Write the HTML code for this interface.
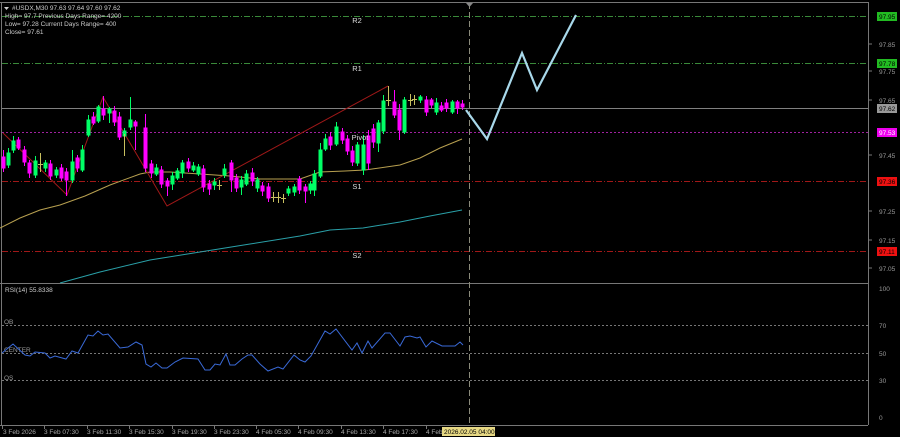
<!DOCTYPE html>
<html><head><style>
html,body{margin:0;padding:0;background:#000;}
svg{display:block;font-family:"Liberation Sans",sans-serif;}
</style></head><body>
<svg width="900" height="437" viewBox="0 0 900 437" xmlns="http://www.w3.org/2000/svg">
<rect width="900" height="437" fill="#000"/>
<!-- frames -->
<g stroke="#777" stroke-width="1" fill="none">
<line x1="0" y1="2.5" x2="868" y2="2.5"/>
<line x1="1.5" y1="2" x2="1.5" y2="425"/>
<line x1="868.5" y1="2" x2="868.5" y2="425"/>
<line x1="0" y1="283.5" x2="868" y2="283.5"/>
<line x1="0" y1="425.5" x2="868" y2="425.5"/>
</g>
<!-- levels -->
<line x1="2" y1="16.5" x2="868" y2="16.5" stroke="#3a8a3a" stroke-dasharray="6,2,1,2"/>
<line x1="2" y1="63.5" x2="868" y2="63.5" stroke="#3a8a3a" stroke-dasharray="6,2,1,2"/>
<line x1="2" y1="108.5" x2="868" y2="108.5" stroke="#808080"/>
<line x1="2" y1="132.5" x2="868" y2="132.5" stroke="#a020a0" stroke-dasharray="2,2"/>
<line x1="2" y1="181.5" x2="868" y2="181.5" stroke="#a01818" stroke-dasharray="6,2,1,2"/>
<line x1="2" y1="251.5" x2="868" y2="251.5" stroke="#a01818" stroke-dasharray="6,2,1,2"/>
<!-- RSI levels -->
<g stroke="#777" stroke-dasharray="2,2"><line x1="2" y1="325.5" x2="868" y2="325.5"/><line x1="2" y1="353.5" x2="868" y2="353.5"/><line x1="2" y1="380.5" x2="868" y2="380.5"/></g>
<!-- vertical dashed -->
<line x1="469.5" y1="3" x2="469.5" y2="425" stroke="#8a8a7a" stroke-dasharray="6,3"/>
<polygon points="466,3 473,3 469.5,7" fill="#888"/>
<!-- MAs -->
<polyline fill="none" stroke="#2aa0a8" stroke-width="1" points="60,283 100,272 150,260 200,252 250,244 300,236 330,230 363,228 400,222 430,216 462,210"/>
<polyline fill="none" stroke="#b8a050" stroke-width="1" points="0,228 20,218 40,210 60,205 85,196 110,185 140,174 150,172 170,172 200,174 230,176 260,179 300,179 320,172 345,171 365,170 400,165 420,158 440,148 462,139"/>
<!-- zigzag -->
<polyline fill="none" stroke="#a01818" stroke-width="1" points="3,133 67,195 103,97 167,206 388,86"/>
<!-- candles -->
<g stroke-width="1">
<g stroke="#00ff66" fill="#00ff66">
<line x1="8.5" y1="148" x2="8.5" y2="168"/><rect x="7" y="153" width="3" height="12"/>
<line x1="13.5" y1="136" x2="13.5" y2="153"/><rect x="12" y="141" width="3" height="9"/>
<line x1="35.5" y1="156" x2="35.5" y2="178"/><rect x="34" y="161" width="3" height="14"/>
<line x1="45.5" y1="160" x2="45.5" y2="172"/><rect x="44" y="163" width="3" height="5"/>
<line x1="56.5" y1="167" x2="56.5" y2="178"/><rect x="55" y="170" width="3" height="5"/>
<line x1="72.5" y1="150" x2="72.5" y2="183"/><rect x="71" y="162" width="3" height="18"/>
<line x1="82.5" y1="145" x2="82.5" y2="172"/><rect x="81" y="150" width="3" height="20"/>
<line x1="88.5" y1="115" x2="88.5" y2="137"/><rect x="87" y="120" width="3" height="15"/>
<line x1="98.5" y1="105" x2="98.5" y2="123"/><rect x="97" y="107" width="3" height="14"/>
<line x1="109.5" y1="107" x2="109.5" y2="123"/><rect x="108" y="109" width="3" height="4"/>
<line x1="124.5" y1="128" x2="124.5" y2="140"/><rect x="123" y="131" width="3" height="5"/>
<line x1="130.5" y1="97" x2="130.5" y2="130"/><rect x="129" y="120" width="3" height="7"/>
<line x1="156.5" y1="164" x2="156.5" y2="176"/><rect x="155" y="168" width="3" height="6"/>
<line x1="172.5" y1="172" x2="172.5" y2="190"/><rect x="171" y="176" width="3" height="8"/>
<line x1="177.5" y1="168" x2="177.5" y2="180"/><rect x="176" y="171" width="3" height="7"/>
<line x1="182.5" y1="160" x2="182.5" y2="178"/><rect x="181" y="163" width="3" height="10"/>
<line x1="193.5" y1="162" x2="193.5" y2="172"/><rect x="192" y="166" width="3" height="4"/>
<line x1="198.5" y1="164" x2="198.5" y2="176"/><rect x="197" y="167" width="3" height="7"/>
<line x1="214.5" y1="178" x2="214.5" y2="190"/><rect x="213" y="182" width="3" height="3"/>
<line x1="224.5" y1="164" x2="224.5" y2="178"/><rect x="223" y="169" width="3" height="6"/>
<line x1="241.5" y1="176" x2="241.5" y2="195"/><rect x="240" y="180" width="3" height="7"/>
<line x1="246.5" y1="170" x2="246.5" y2="186"/><rect x="245" y="174" width="3" height="10"/>
<line x1="257.5" y1="177" x2="257.5" y2="192"/><rect x="256" y="180" width="3" height="8"/>
<line x1="288.5" y1="186" x2="288.5" y2="196"/><rect x="287" y="189" width="3" height="4"/>
<line x1="294.5" y1="184" x2="294.5" y2="196"/><rect x="293" y="187" width="3" height="5"/>
<line x1="310.5" y1="181" x2="310.5" y2="194"/><rect x="309" y="184" width="3" height="6"/>
<line x1="314.5" y1="170" x2="314.5" y2="196"/><rect x="313" y="174" width="3" height="16"/>
<line x1="320.5" y1="143" x2="320.5" y2="178"/><rect x="319" y="150" width="3" height="26"/>
<line x1="325.5" y1="134" x2="325.5" y2="151"/><rect x="324" y="139" width="3" height="10"/>
<line x1="336.5" y1="122" x2="336.5" y2="146"/><rect x="335" y="127" width="3" height="17"/>
<line x1="357.5" y1="142" x2="357.5" y2="166"/><rect x="356" y="145" width="3" height="18"/>
<line x1="363.5" y1="135" x2="363.5" y2="175"/><rect x="362" y="145" width="3" height="25"/>
<line x1="378.5" y1="120" x2="378.5" y2="152"/><rect x="377" y="123" width="3" height="20"/>
<line x1="383.5" y1="95" x2="383.5" y2="134"/><rect x="382" y="101" width="3" height="30"/>
<line x1="404.5" y1="97" x2="404.5" y2="134"/><rect x="403" y="100" width="3" height="32"/>
<line x1="420.5" y1="95" x2="420.5" y2="103"/><rect x="419" y="97" width="3" height="3"/>
<line x1="436.5" y1="98" x2="436.5" y2="115"/><rect x="435" y="103" width="3" height="9"/>
<line x1="452.5" y1="100" x2="452.5" y2="114"/><rect x="451" y="102" width="3" height="10"/>
</g>
<g stroke="#ff00ff" fill="#ff00ff">
<line x1="3.5" y1="150" x2="3.5" y2="172"/><rect x="2" y="157" width="3" height="11"/>
<line x1="18.5" y1="137" x2="18.5" y2="150"/><rect x="17" y="140" width="3" height="8"/>
<line x1="24.5" y1="146" x2="24.5" y2="166"/><rect x="23" y="150" width="3" height="12"/>
<line x1="29.5" y1="160" x2="29.5" y2="178"/><rect x="28" y="163" width="3" height="10"/>
<line x1="50.5" y1="160" x2="50.5" y2="180"/><rect x="49" y="164" width="3" height="12"/>
<line x1="61.5" y1="164" x2="61.5" y2="181"/><rect x="60" y="168" width="3" height="10"/>
<line x1="66.5" y1="168" x2="66.5" y2="196"/><rect x="65" y="172" width="3" height="8"/>
<line x1="77.5" y1="155" x2="77.5" y2="172"/><rect x="76" y="158" width="3" height="10"/>
<line x1="93.5" y1="112" x2="93.5" y2="125"/><rect x="92" y="117" width="3" height="6"/>
<line x1="103.5" y1="96" x2="103.5" y2="120"/><rect x="102" y="109" width="3" height="6"/>
<line x1="114.5" y1="106" x2="114.5" y2="126"/><rect x="113" y="111" width="3" height="11"/>
<line x1="119.5" y1="112" x2="119.5" y2="140"/><rect x="118" y="117" width="3" height="20"/>
<line x1="135.5" y1="120" x2="135.5" y2="150"/><rect x="134" y="122" width="3" height="4"/>
<line x1="145.5" y1="114" x2="145.5" y2="172"/><rect x="144" y="128" width="3" height="40"/>
<line x1="151.5" y1="160" x2="151.5" y2="178"/><rect x="150" y="164" width="3" height="9"/>
<line x1="161.5" y1="166" x2="161.5" y2="188"/><rect x="160" y="170" width="3" height="14"/>
<line x1="167.5" y1="178" x2="167.5" y2="196"/><rect x="166" y="181" width="3" height="5"/>
<line x1="188.5" y1="158" x2="188.5" y2="172"/><rect x="187" y="162" width="3" height="6"/>
<line x1="203.5" y1="165" x2="203.5" y2="192"/><rect x="202" y="169" width="3" height="18"/>
<line x1="209.5" y1="180" x2="209.5" y2="195"/><rect x="208" y="184" width="3" height="5"/>
<line x1="231.5" y1="160" x2="231.5" y2="192"/><rect x="230" y="163" width="3" height="17"/>
<line x1="236.5" y1="174" x2="236.5" y2="192"/><rect x="235" y="178" width="3" height="10"/>
<line x1="252.5" y1="168" x2="252.5" y2="186"/><rect x="251" y="173" width="3" height="8"/>
<line x1="262.5" y1="182" x2="262.5" y2="196"/><rect x="261" y="186" width="3" height="5"/>
<line x1="268.5" y1="183" x2="268.5" y2="202"/><rect x="267" y="187" width="3" height="11"/>
<line x1="299.5" y1="176" x2="299.5" y2="194"/><rect x="298" y="179" width="3" height="11"/>
<line x1="305.5" y1="184" x2="305.5" y2="203"/><rect x="304" y="187" width="3" height="4"/>
<line x1="330.5" y1="132" x2="330.5" y2="150"/><rect x="329" y="137" width="3" height="8"/>
<line x1="342.5" y1="128" x2="342.5" y2="144"/><rect x="341" y="132" width="3" height="8"/>
<line x1="347.5" y1="135" x2="347.5" y2="155"/><rect x="346" y="139" width="3" height="12"/>
<line x1="352.5" y1="146" x2="352.5" y2="166"/><rect x="351" y="151" width="3" height="11"/>
<line x1="368.5" y1="130" x2="368.5" y2="170"/><rect x="367" y="136" width="3" height="27"/>
<line x1="373.5" y1="124" x2="373.5" y2="148"/><rect x="372" y="129" width="3" height="13"/>
<line x1="394.5" y1="90" x2="394.5" y2="118"/><rect x="393" y="102" width="3" height="13"/>
<line x1="399.5" y1="104" x2="399.5" y2="140"/><rect x="398" y="110" width="3" height="20"/>
<line x1="426.5" y1="96" x2="426.5" y2="116"/><rect x="425" y="100" width="3" height="12"/>
<line x1="431.5" y1="98" x2="431.5" y2="108"/><rect x="430" y="100" width="3" height="5"/>
<line x1="441.5" y1="102" x2="441.5" y2="112"/><rect x="440" y="106" width="3" height="4"/>
<line x1="446.5" y1="99" x2="446.5" y2="112"/><rect x="445" y="103" width="3" height="5"/>
<line x1="457.5" y1="100" x2="457.5" y2="114"/><rect x="456" y="102" width="3" height="6"/>
<line x1="462.5" y1="100" x2="462.5" y2="110"/><rect x="461" y="104" width="3" height="3"/>
</g>
<g stroke="#c8c060">
<line x1="40.5" y1="153" x2="40.5" y2="172"/><line x1="38" y1="164.5" x2="43" y2="164.5"/>
<line x1="219.5" y1="180" x2="219.5" y2="190"/><line x1="217" y1="185.5" x2="222" y2="185.5"/>
<line x1="273.5" y1="192" x2="273.5" y2="202"/><line x1="271" y1="197.5" x2="276" y2="197.5"/>
<line x1="278.5" y1="192" x2="278.5" y2="203"/><line x1="276" y1="197.5" x2="281" y2="197.5"/>
<line x1="283.5" y1="194" x2="283.5" y2="203"/><line x1="281" y1="198.5" x2="286" y2="198.5"/>
<line x1="124.5" y1="134" x2="124.5" y2="156"/>
<line x1="388.5" y1="86" x2="388.5" y2="106"/><line x1="386" y1="100.5" x2="391" y2="100.5"/>
<line x1="410.5" y1="94" x2="410.5" y2="106"/><line x1="408" y1="100.5" x2="413" y2="100.5"/>
<line x1="414.5" y1="95" x2="414.5" y2="105"/><line x1="412" y1="99.5" x2="417" y2="99.5"/>
</g>
</g>
<!-- projection -->
<polyline fill="none" stroke="#a8d8ea" stroke-width="2.2" points="466,110 487,139 522,53 537,90 576,15"/>
<!-- level labels -->
<g fill="#ddd" font-size="7.5" text-anchor="middle">
<text x="357" y="23">R2</text><text x="357" y="71">R1</text><text x="360" y="140">Pivot</text><text x="357" y="189">S1</text><text x="357" y="258">S2</text>
</g>
<!-- header text -->
<g fill="#ccc" font-size="6.5">
<polygon points="4,7 9,7 6.5,10" fill="#ccc"/>
<text x="12" y="10">#USDX,M30  97.63 97.64 97.60 97.62</text>
<text x="5" y="18">High= 97.7   Previous Days Range= 4200</text>
<text x="5" y="26">Low= 97.28   Current Days Range= 400</text>
<text x="5" y="34">Close= 97.61</text>
<text x="5" y="292">RSI(14) 55.8338</text>
<text x="4" y="324" fill="#999">OB</text>
<text x="4" y="352" fill="#999">CENTER</text>
<text x="4" y="380" fill="#999">OS</text>
</g>
<!-- RSI line -->
<polyline fill="none" stroke="#3a6ad8" stroke-width="1" points="2,353 13,344 25,355 30,356 35,352 45,353 50,358 55,356 66,359 72,351 78,353 88,335 93,336 98,331 103,335 108,334 120,348 128,347 136,342 142,345 146,364 151,367 156,363 162,368 167,368 175,362 183,358 198,359 205,370 210,370 215,364 220,365 226,354 230,365 235,365 242,359 248,355 252,355 260,364 268,371 278,367 283,369 294,355 300,360 305,362 311,356 325,331 330,334 336,329 352,350 357,343 362,353 368,341 372,348 385,333 390,333 400,346 405,337 410,336 417,338 420,337 426,347 432,341 442,346 455,346 460,342 463,345"/>
<!-- right axis -->
<g fill="#999" font-size="6.5">
<text x="879" y="47">97.85</text><text x="879" y="74">97.75</text><text x="879" y="103">97.65</text>
<text x="879" y="158">97.45</text><text x="879" y="214">97.25</text><text x="879" y="243">97.15</text><text x="879" y="271">97.05</text>
<text x="879" y="291">100</text><text x="879" y="328">70</text><text x="879" y="356">50</text><text x="879" y="383">30</text><text x="879" y="420">0</text>
</g>
<g stroke="#777"><line x1="869" y1="44" x2="872" y2="44"/><line x1="869" y1="71" x2="872" y2="71"/><line x1="869" y1="100" x2="872" y2="100"/><line x1="869" y1="155" x2="872" y2="155"/><line x1="869" y1="211" x2="872" y2="211"/><line x1="869" y1="240" x2="872" y2="240"/><line x1="869" y1="268" x2="872" y2="268"/></g>
<g font-size="6.5">
<rect x="877" y="12" width="20" height="9" fill="#22bb22"/><text x="879" y="19" fill="#000">97.95</text>
<rect x="877" y="59" width="20" height="9" fill="#22bb22"/><text x="879" y="66" fill="#000">97.78</text>
<rect x="877" y="104" width="20" height="9" fill="#999"/><text x="879" y="111" fill="#000">97.62</text>
<rect x="877" y="128" width="20" height="9" fill="#ee00ee"/><text x="879" y="135" fill="#fff">97.53</text>
<rect x="877" y="177" width="20" height="9" fill="#ee1111"/><text x="879" y="184" fill="#000">97.36</text>
<rect x="877" y="247" width="20" height="9" fill="#ee1111"/><text x="879" y="254" fill="#000">97.11</text>
</g>
<!-- bottom axis -->
<g fill="#aaa" font-size="6.5">
<text x="3" y="434">3 Feb 2026</text><text x="44" y="434">3 Feb 07:30</text><text x="87" y="434">3 Feb 11:30</text>
<text x="129" y="434">3 Feb 15:30</text><text x="172" y="434">3 Feb 19:30</text><text x="214" y="434">3 Feb 23:30</text>
<text x="256" y="434">4 Feb 05:30</text><text x="298" y="434">4 Feb 09:30</text><text x="341" y="434">4 Feb 13:30</text>
<text x="383" y="434">4 Feb 17:30</text><text x="426" y="434">4 Feb</text>
</g>
<g stroke="#777"><line x1="2.5" y1="426" x2="2.5" y2="429"/><line x1="44.5" y1="426" x2="44.5" y2="429"/><line x1="87.5" y1="426" x2="87.5" y2="429"/><line x1="129.5" y1="426" x2="129.5" y2="429"/><line x1="172.5" y1="426" x2="172.5" y2="429"/><line x1="214.5" y1="426" x2="214.5" y2="429"/><line x1="256.5" y1="426" x2="256.5" y2="429"/><line x1="298.5" y1="426" x2="298.5" y2="429"/><line x1="341.5" y1="426" x2="341.5" y2="429"/><line x1="383.5" y1="426" x2="383.5" y2="429"/><line x1="426.5" y1="426" x2="426.5" y2="429"/></g>
<rect x="442" y="427" width="53" height="9" fill="#e6d884"/>
<text x="444" y="434" fill="#000" font-size="6.5">2026.02.05 04:00</text>
</svg>
</body></html>
